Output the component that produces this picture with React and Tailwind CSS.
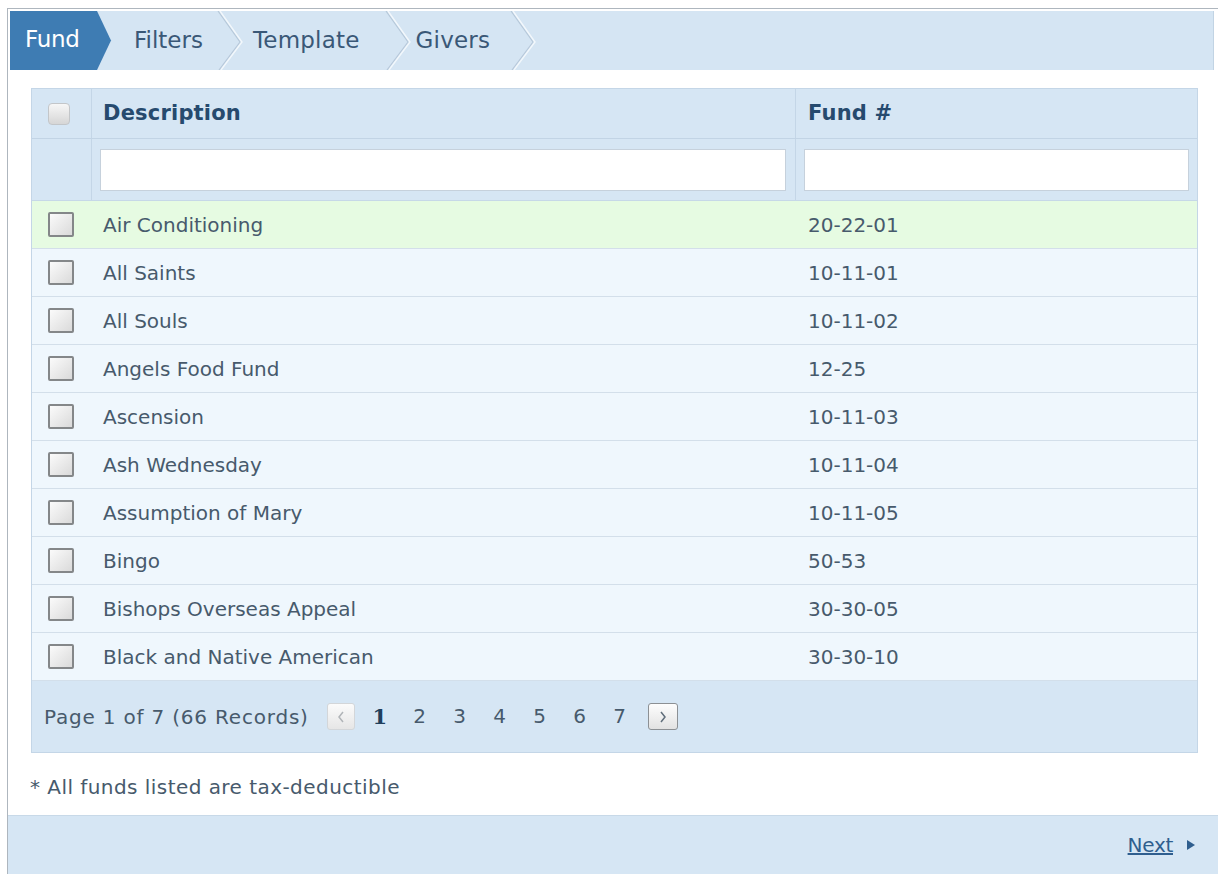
import React from "react";

const FONT = { fontFamily: '"DejaVu Sans", Verdana, Tahoma, sans-serif' };

const funds = [
  ["Air Conditioning", "20-22-01"],
  ["All Saints", "10-11-01"],
  ["All Souls", "10-11-02"],
  ["Angels Food Fund", "12-25"],
  ["Ascension", "10-11-03"],
  ["Ash Wednesday", "10-11-04"],
  ["Assumption of Mary", "10-11-05"],
  ["Bingo", "50-53"],
  ["Bishops Overseas Appeal", "30-30-05"],
  ["Black and Native American", "30-30-10"],
];

function Chevron() {
  return (
    <svg width="26" height="59" viewBox="0 0 26 59" className="shrink-0">
      <polyline points="1,0 23,31 2,59" fill="none" stroke="#b7c9da" strokeWidth="1.2" />
      <polyline points="3,0 25,31 4,59" fill="none" stroke="#f3f8fc" strokeWidth="1.4" />
    </svg>
  );
}

function Box({ light }) {
  if (light) {
    return (
      <div className="w-[22px] h-[22px] rounded-[4px] border border-[#c3c6c9] bg-gradient-to-b from-[#f7f7f7] to-[#d6d6d6]" />
    );
  }
  return (
    <div className="w-[26px] h-[25px] border-2 border-[#848789] rounded-[2px] bg-gradient-to-br from-[#fbfbfb] to-[#dadada]" />
  );
}

const pages = ["1", "2", "3", "4", "5", "6", "7"];

export default function App() {
  return (
    <div className="w-[1218px] h-[874px] bg-white pl-[7px] pt-[8px] overflow-hidden" style={FONT}>
      <div className="h-full border-l border-t border-[#aeb6be] flex flex-col">
        {/* step tabs */}
        <div className="mt-[2px] ml-[2px] mr-[4px] h-[59px] bg-[#d5e5f3] border-r border-[#c2d4e4] flex items-stretch">
          <div className="relative w-[102px] h-full shrink-0">
            <svg width="102" height="59" viewBox="0 0 102 59" className="absolute inset-0">
              <polygon points="0,0 87,0 101,29.5 87,59 0,59" fill="#3e7cb3" />
            </svg>
            <span className="absolute left-[15px] top-[14px] text-[23px] leading-[28px] text-white tracking-[-0.3px]">Fund</span>
          </div>
          <div className="flex items-center pl-[22px]">
            <span className="text-[23px] text-[#3a5877] tracking-[0px]">Filters</span>
          </div>
          <div className="pl-[14px]"><Chevron /></div>
          <div className="flex items-center pl-[10px]">
            <span className="text-[23px] text-[#3a5877] tracking-[0.2px]">Template</span>
          </div>
          <div className="pl-[25px]"><Chevron /></div>
          <div className="flex items-center pl-[5px]">
            <span className="text-[23px] text-[#3a5877] tracking-[0.2px]">Givers</span>
          </div>
          <div className="pl-[20px]"><Chevron /></div>
        </div>

        {/* main content */}
        <div className="flex-1 pl-[23px] pr-[20px] pt-[18px]">
          <div className="border border-[#c4d6e7]">
            {/* header */}
            <div className="flex h-[50px] bg-[#d6e6f4] border-b border-[#c2d4e5]">
              <div className="w-[60px] flex items-center pl-[16px] border-r border-[#c4d6e7]">
                <Box light />
              </div>
              <div className="w-[704px] flex items-center pl-[11px] border-r border-[#c4d6e7] text-[21px] font-bold text-[#264a6e] tracking-[0.2px]">
                Description
              </div>
              <div className="flex-1 flex items-center pl-[12px] text-[21px] font-bold text-[#264a6e] tracking-[0.2px]">
                Fund #
              </div>
            </div>
            {/* filters */}
            <div className="flex h-[62px] bg-[#d6e6f4] border-b border-[#c6d8e8]">
              <div className="w-[60px] border-r border-[#c4d6e7]" />
              <div className="w-[704px] flex items-center pl-[8px] pr-[9px] border-r border-[#c4d6e7]">
                <div className="w-full h-[42px] bg-white border border-[#c6d1dc]" />
              </div>
              <div className="flex-1 flex items-center pl-[8px] pr-[8px]">
                <div className="w-full h-[42px] bg-white border border-[#c6d1dc]" />
              </div>
            </div>
            {/* rows */}
            {funds.map(([name, num], i) => (
              <div
                key={name}
                className={`flex h-[48px] border-b border-[#d3dfea] text-[20px] text-[#475a6c] ${
                  i === 0 ? "bg-[#e6fbe2]" : "bg-[#eff7fd]"
                }`}
              >
                <div className="w-[60px] flex items-center pl-[16px]">
                  <Box />
                </div>
                <div className="w-[704px] flex items-center pl-[11px]">{name}</div>
                <div className="flex-1 flex items-center pl-[12px]">{num}</div>
              </div>
            ))}
            {/* pager */}
            <div className="h-[71px] bg-[#d6e6f4] flex items-center pl-[12px] text-[20px] text-[#475a6c]">
              <span className="tracking-[0.8px]">Page 1 of 7 (66 Records)</span>
              <span className="ml-[18px] w-[28px] h-[27px] border border-[#d3d6d9] rounded-[3px] bg-gradient-to-b from-[#fbfbfb] to-[#e6e6e6] flex items-center justify-center">
                <svg width="10" height="12" viewBox="0 0 10 12"><polyline points="7,1 3,6 7,11" fill="none" stroke="#b0b4b8" strokeWidth="1.5" /></svg>
              </span>
              <div className="ml-[5px] flex">
                {pages.map((p) => (
                  <span
                    key={p}
                    className={`w-[40px] text-center ${p === "1" ? "font-bold text-[#213f5c] text-[21px]" : ""}`}
                    style={p === "1" ? { fontFamily: '"DejaVu Serif", serif' } : undefined}
                  >
                    {p}
                  </span>
                ))}
              </div>
              <span className="ml-[8px] w-[30px] h-[27px] border border-[#8c9094] rounded-[3px] bg-gradient-to-b from-[#fdfdfd] to-[#e2e2e2] flex items-center justify-center">
                <svg width="10" height="12" viewBox="0 0 10 12"><polyline points="3,1 7,6 3,11" fill="none" stroke="#5f6d7a" strokeWidth="1.5" /></svg>
              </span>
            </div>
          </div>
          <div className="mt-[19px] text-[20px] text-[#475a6c] -ml-[1px] tracking-[0.45px]">* All funds listed are tax-deductible</div>
        </div>

        {/* footer */}
        <div className="h-[59px] bg-[#d6e6f4] border-t border-[#c8d9e8] flex items-center justify-end pr-[22px]">
          <a href="#" className="text-[20px] text-[#2f5e8e] underline tracking-[-0.3px]">Next</a>
          <svg width="10" height="12" viewBox="0 0 10 12" className="ml-[13px]">
            <polygon points="1,1 9,6 1,11" fill="#2f5e8e" />
          </svg>
        </div>
      </div>
    </div>
  );
}
